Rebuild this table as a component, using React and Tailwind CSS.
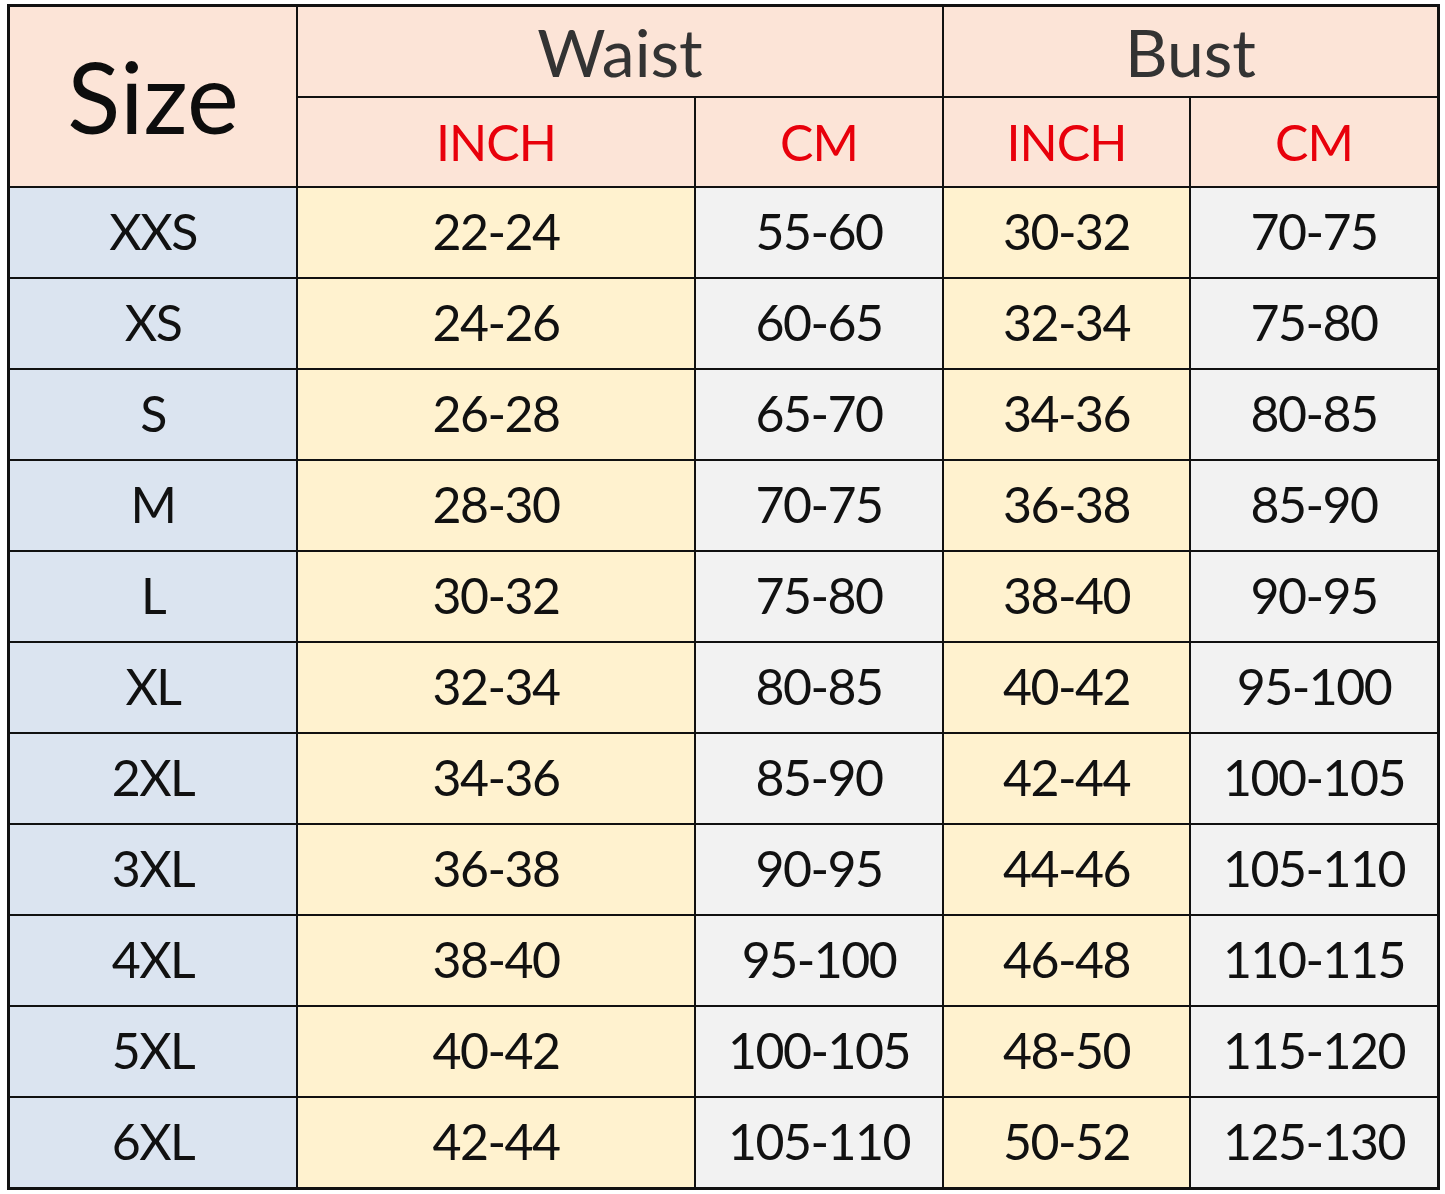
import React from 'react';

const rows = [
  ['XXS', '22-24', '55-60', '30-32', '70-75'],
  ['XS', '24-26', '60-65', '32-34', '75-80'],
  ['S', '26-28', '65-70', '34-36', '80-85'],
  ['M', '28-30', '70-75', '36-38', '85-90'],
  ['L', '30-32', '75-80', '38-40', '90-95'],
  ['XL', '32-34', '80-85', '40-42', '95-100'],
  ['2XL', '34-36', '85-90', '42-44', '100-105'],
  ['3XL', '36-38', '90-95', '44-46', '105-110'],
  ['4XL', '38-40', '95-100', '46-48', '110-115'],
  ['5XL', '40-42', '100-105', '48-50', '115-120'],
  ['6XL', '42-44', '105-110', '50-52', '125-130'],
];

// background per column: size, inch, cm, inch, cm
const colBg = ['bg-[#dbe4f0]', 'bg-[#fff2cf]', 'bg-[#f2f2f2]', 'bg-[#fff2cf]', 'bg-[#f2f2f2]'];

const Cell = ({ className = '', children }) => (
  <div className={`flex items-center justify-center ${className}`}>{children}</div>
);

export default function App() {
  return (
    <div className="w-[1445px] h-[1194px] bg-white pt-[4px] pl-[7px] font-['Lato',sans-serif]">
      <div className="w-[1433px] border-[3px] border-[#111]">
        <div className="grid grid-cols-[286px_396px_246px_245px_246px] grid-rows-[89px_88px_repeat(11,89px)] gap-[2px] bg-[#111]">
          {/* Header */}
          <Cell className="row-span-2 bg-[#fce4d7] text-[98px] text-[#0d0d0d] leading-none pb-[2px]">Size</Cell>
          <Cell className="col-span-2 bg-[#fce4d7] text-[66px] text-[#333] leading-none">Waist</Cell>
          <Cell className="col-span-2 bg-[#fce4d7] text-[66px] text-[#333] leading-none">Bust</Cell>
          <Cell className="bg-[#fce4d7] text-[50px] text-[#e8000b] leading-none tracking-[-1px]">INCH</Cell>
          <Cell className="bg-[#fce4d7] text-[50px] text-[#e8000b] leading-none tracking-[-1px]">CM</Cell>
          <Cell className="bg-[#fce4d7] text-[50px] text-[#e8000b] leading-none tracking-[-1px]">INCH</Cell>
          <Cell className="bg-[#fce4d7] text-[50px] text-[#e8000b] leading-none tracking-[-1px]">CM</Cell>

          {/* Body */}
          {rows.map((r) =>
            r.map((v, i) => (
              <Cell
                key={r[0] + i}
                className={`${colBg[i]} text-[50px] text-[#111] leading-none tracking-[-1.5px] pb-[4px]`}
              >
                {v}
              </Cell>
            ))
          )}
        </div>
      </div>
    </div>
  );
}
